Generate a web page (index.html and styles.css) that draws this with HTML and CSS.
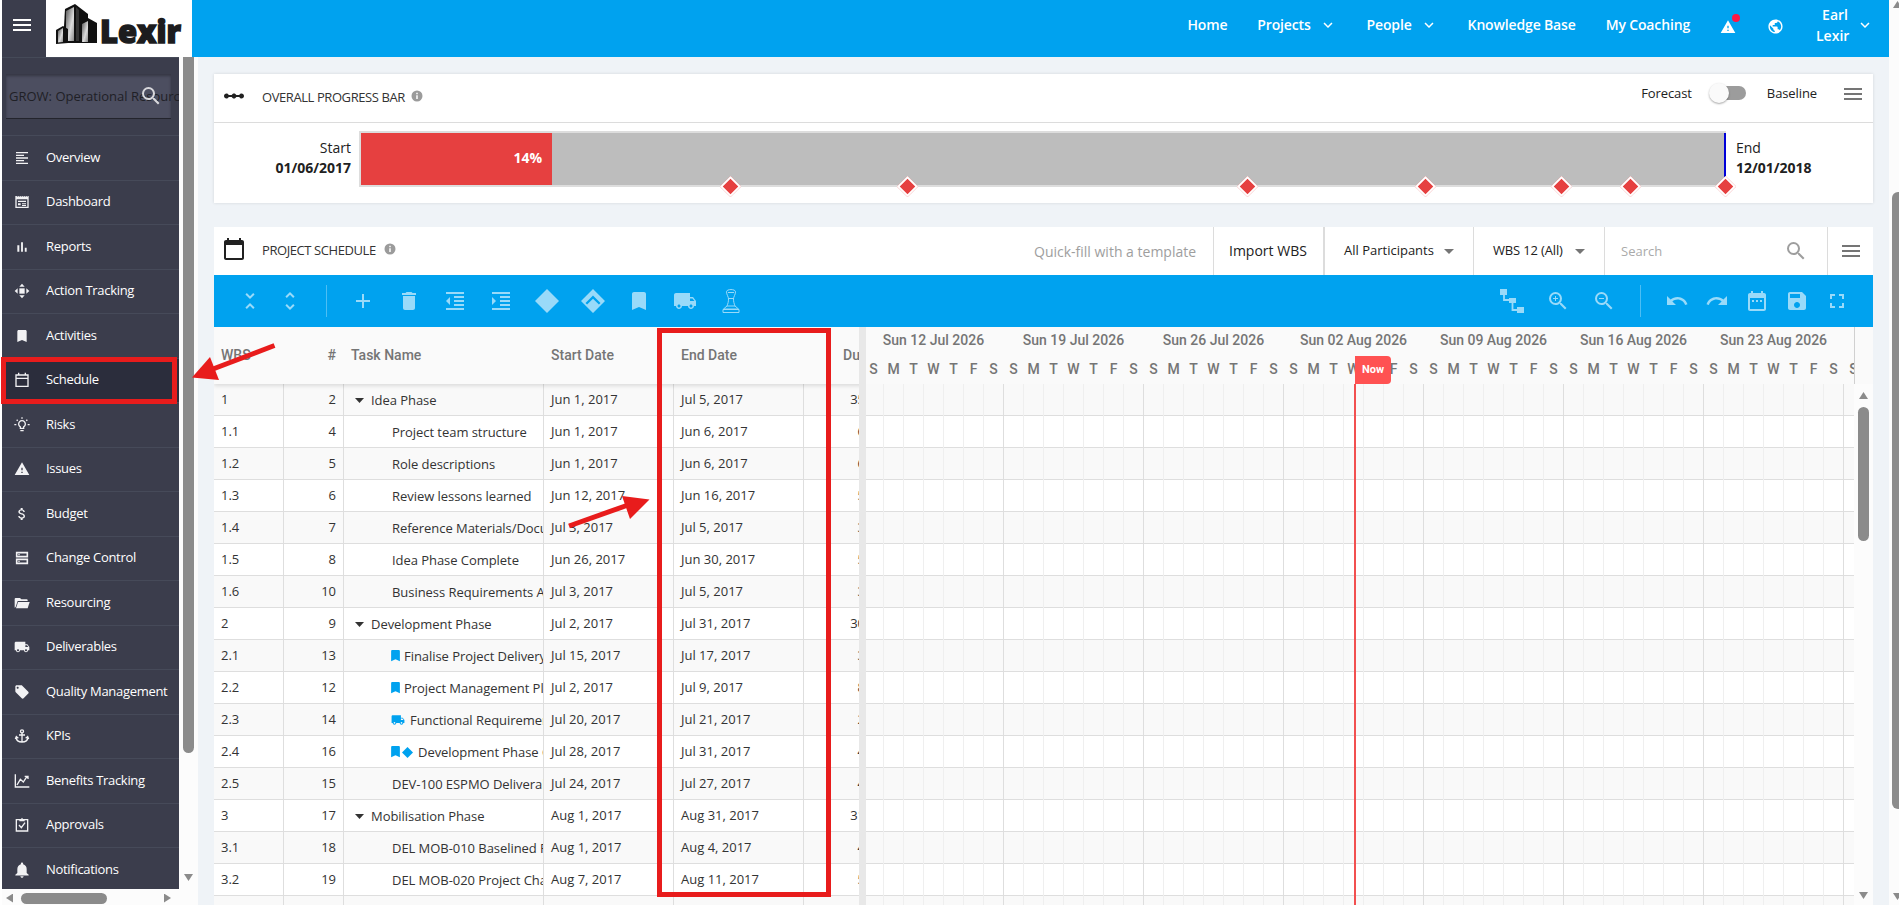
FILE: index.html
```html
<!DOCTYPE html>
<html lang="en">
<head>
    <meta charset="UTF-8">
    <meta name="viewport" content="width=device-width, initial-scale=1.0">
    <title>Lexir - Schedule</title>
    <link rel="stylesheet" href="styles.css">
</head>
<body>
    <!-- Icon sprite -->
    <svg class="sprite">
        <symbol id="menu" viewBox="0 0 24 24"><path d="M3 18h18v-2H3v2zm0-5h18v-2H3v2zm0-7v2h18V6H3z"/></symbol>
        <symbol id="search" viewBox="0 0 24 24"><path d="M15.5 14h-.79l-.28-.27A6.471 6.471 0 0 0 16 9.5 6.5 6.5 0 1 0 9.5 16c1.61 0 3.09-.59 4.23-1.57l.27.28v.79l5 4.99L20.49 19l-4.99-5zm-6 0C7.01 14 5 11.99 5 9.5S7.01 5 9.5 5 14 7.01 14 9.5 11.99 14 9.5 14z"/></symbol>
        <symbol id="overview" viewBox="0 0 24 24"><path d="M15 15H3v2h12v-2zm0-8H3v2h12V7zM3 13h18v-2H3v2zm0 8h18v-2H3v2zM3 3v2h18V3H3z"/></symbol>
        <symbol id="dashboard" viewBox="0 0 24 24"><path d="M2 3h2l1 1 1.500-1L8 4l1.500-1L11 4l1.500-1L14 4l1.500-1L17 4l1.500-1L20 4l1-1h1v18H2zM4 8v11h16V8zM6 10h12v2H6zM6 14h4v3H6zM12 14h6v1h-6zM12 16h6v2h-6z" fill-rule="evenodd"/></symbol>
        <symbol id="reports" viewBox="0 0 24 24"><path d="M5 9.200h3V19H5zM10.600 5h2.800v14h-2.800zm5.600 8H19v6h-2.800z"/></symbol>
        <symbol id="tracking" viewBox="0 0 24 24"><path d="M12 1l4 4.500H8zM12 23l4-4.500H8zM1 12l4.500-4v8zM23 12l-4.500-4v8z"/><path d="M8 8h8v8H8z"/></symbol>
        <symbol id="bookmark" viewBox="0 0 24 24"><path d="M17 3H7c-1.100 0-1.990.9-1.990 2L5 21l7-3 7 3V5c0-1.100-.9-2-2-2z"/></symbol>
        <symbol id="schedule" viewBox="0 0 24 24"><path d="M3 4.500h18v17H3zM3 9.500h18M7 1v3M17 1v3" fill="none" stroke="currentColor" stroke-width="2"/></symbol>
        <symbol id="calendar" viewBox="0 0 24 24"><path d="M20 3h-1V1h-2v2H7V1H5v2H4c-1.100 0-2 .9-2 2v16c0 1.100.9 2 2 2h16c1.100 0 2-.9 2-2V5c0-1.100-.9-2-2-2zm0 18H4V8h16v13z"/></symbol>
        <symbol id="risks" viewBox="0 0 24 24"><path d="M9.500 17v-2.200a5 5 0 1 1 5 0V17zM9.500 20.500h5M12 .5v2M.5 11.500h3M20.500 11.500h3M4 4l1.600 1.600M20 4l-1.600 1.600" fill="none" stroke="currentColor" stroke-width="2"/></symbol>
        <symbol id="warning" viewBox="0 0 24 24"><path d="M1 21h22L12 2 1 21zm12-3h-2v-2h2v2zm0-4h-2v-4h2v4z"/></symbol>
        <symbol id="budget" viewBox="0 0 24 24"><path d="M11.800 10.900c-2.270-.59-3-1.200-3-2.150 0-1.090 1.010-1.850 2.700-1.850 1.780 0 2.440.85 2.500 2.100h2.210c-.07-1.720-1.120-3.300-3.210-3.810V3h-3v2.160c-1.940.42-3.500 1.680-3.500 3.610 0 2.310 1.910 3.460 4.700 4.130 2.500.6 3 1.480 3 2.410 0 .69-.49 1.790-2.700 1.790-2.060 0-2.870-.92-2.980-2.100h-2.200c.12 2.190 1.760 3.420 3.680 3.830V21h3v-2.150c1.950-.37 3.500-1.500 3.500-3.550 0-2.840-2.430-3.810-4.700-4.400z"/></symbol>
        <symbol id="change" viewBox="0 0 24 24"><path d="M4 4h16v6H4zM4 14h16v6H4z" fill="none" stroke="currentColor" stroke-width="2.400"/><path d="M6.500 6h2v2h-2zM6.500 16h2v2h-2z"/></symbol>
        <symbol id="folder" viewBox="0 0 24 24"><path d="M1 19V6c0-1 .5-1.500 1.500-1.500H9l2 2h8c1 0 1.500.5 1.500 1.500v1H5.500L2.500 18z"/><path d="M6 10.500h17.500L20.500 20H3z"/></symbol>
        <symbol id="truck" viewBox="0 0 24 24"><path d="M20 8h-3V4H3c-1.100 0-2 .9-2 2v11h2c0 1.660 1.340 3 3 3s3-1.340 3-3h6c0 1.660 1.340 3 3 3s3-1.340 3-3h2v-5l-3-4zM6 18.500c-.83 0-1.500-.67-1.500-1.500s.67-1.500 1.500-1.500 1.500.67 1.500 1.500-.67 1.500-1.500 1.500zm13.500-9l1.960 2.500H17V9.500h2.500zm-1.500 9c-.83 0-1.500-.67-1.500-1.500s.67-1.500 1.500-1.500 1.500.67 1.500 1.500-.67 1.500-1.500 1.500z"/></symbol>
        <symbol id="tag" viewBox="0 0 24 24"><path d="M21.410 11.580l-9-9C12.050 2.220 11.550 2 11 2H4c-1.100 0-2 .9-2 2v7c0 .55.22 1.050.59 1.420l9 9c.36.36.86.58 1.410.58.55 0 1.050-.22 1.410-.59l7-7c.37-.36.59-.86.59-1.410 0-.55-.23-1.060-.59-1.420zM5.500 7C4.670 7 4 6.330 4 5.500S4.670 4 5.500 4 7 4.670 7 5.500 6.330 7 5.500 7z"/></symbol>
        <symbol id="anchor" viewBox="0 0 24 24"><path d="M12 7.500V21M7.500 10.500h9M3 14c.5 4.500 4 7 9 7s8.500-2.500 9-7M2 16.500L3.500 13l3 2.500M22 16.500L20.500 13l-3 2.500" fill="none" stroke="currentColor" stroke-width="2"/><circle cx="12" cy="5" r="2.300" fill="none" stroke="currentColor" stroke-width="2"/></symbol>
        <symbol id="chart" viewBox="0 0 24 24"><path d="M2 2v19h21M4.500 18l5-8.500 4.500 4 5.500-8.500M16 5h5v4" fill="none" stroke="currentColor" stroke-width="2"/></symbol>
        <symbol id="approvals" viewBox="0 0 24 24"><path d="M3.500 4h17v17h-17zM7.500 12l3.500 4 5.500-7.500" fill="none" stroke="currentColor" stroke-width="2"/><path d="M8 3h2.500l1.500-2 1.500 2H16v3.500H8z"/></symbol>
        <symbol id="bell" viewBox="0 0 24 24"><path d="M12 23.500c1.300 0 2.400-1 2.400-2.300H9.600c0 1.300 1.100 2.300 2.400 2.300zm7-7v-6c0-3.600-2-6.400-5.300-7.200V2.500c0-.9-.8-1.700-1.700-1.700s-1.700.8-1.700 1.700v.8C7 4.100 5 7 5 10.500v6l-3 2.600v1.200h20v-1.200z"/></symbol>
        <symbol id="globe" viewBox="0 0 24 24"><path d="M12 2C6.480 2 2 6.480 2 12s4.480 10 10 10 10-4.480 10-10S17.520 2 12 2zm-1 17.930c-3.950-.49-7-3.850-7-7.930 0-.62.08-1.210.21-1.790L9 15v1c0 1.100.9 2 2 2v1.930zm6.900-2.540c-.26-.81-1-1.390-1.900-1.390h-1v-3c0-.55-.45-1-1-1H8v-2h2c.55 0 1-.45 1-1V7h2c1.100 0 2-.9 2-2v-.41c2.930 1.190 5 4.060 5 7.410 0 2.080-.8 3.970-2.100 5.390z"/></symbol>
        <symbol id="info" viewBox="0 0 24 24"><path d="M12 1a11 11 0 1 0 0 22 11 11 0 0 0 0-22zm1.500 17h-3v-7.500h3zm0-9.500h-3v-3h3z"/></symbol>
        <symbol id="scale" viewBox="0 0 24 24"><path d="M19.500 9.500c-1.030 0-1.900.62-2.290 1.500h-2.920C13.900 10.120 13.030 9.500 12 9.500s-1.900.62-2.290 1.500H6.790c-.39-.88-1.260-1.500-2.290-1.500C3.120 9.500 2 10.620 2 12s1.120 2.500 2.500 2.500c1.030 0 1.900-.62 2.290-1.500h2.920c.39.88 1.260 1.500 2.290 1.500s1.900-.62 2.290-1.500h2.920c.39.88 1.260 1.500 2.290 1.500 1.380 0 2.500-1.120 2.500-2.500s-1.120-2.500-2.500-2.500z"/></symbol>
        <symbol id="chevron" viewBox="0 0 24 24"><path d="M16.590 8.590L12 13.170 7.410 8.590 6 10l6 6 6-6z"/></symbol>
        <symbol id="caret" viewBox="0 0 24 24"><path d="M7 10l5 5 5-5z"/></symbol>
        <symbol id="collapse" viewBox="0 0 24 24"><path d="M7.410 18.590L8.830 20 12 16.830 15.170 20l1.410-1.410L12 14l-4.590 4.590zm9.180-13.180L15.170 4 12 7.170 8.830 4 7.410 5.410 12 10l4.590-4.590z"/></symbol>
        <symbol id="expand" viewBox="0 0 24 24"><path d="M12 5.830L15.170 9l1.410-1.410L12 3 7.410 7.590 8.830 9 12 5.830zm0 12.340L8.830 15l-1.410 1.410L12 21l4.590-4.590L15.170 15 12 18.170z"/></symbol>
        <symbol id="add" viewBox="0 0 24 24"><path d="M19 13h-6v6h-2v-6H5v-2h6V5h2v6h6v2z"/></symbol>
        <symbol id="delete" viewBox="0 0 24 24"><path d="M6 19c0 1.100.9 2 2 2h8c1.100 0 2-.9 2-2V7H6v12zM19 4h-3.500l-1-1h-5l-1 1H5v2h14V4z"/></symbol>
        <symbol id="outdent" viewBox="0 0 24 24"><path d="M11 17h10v-2H11v2zm-8-5l4 4V8l-4 4zm0 9h18v-2H3v2zM3 3v2h18V3H3zm8 6h10V7H11v2zm0 4h10v-2H11v2z"/></symbol>
        <symbol id="indent" viewBox="0 0 24 24"><path d="M3 21h18v-2H3v2zM3 8v8l4-4-4-4zm8 9h10v-2H11v2zM3 3v2h18V3H3zm8 6h10V7H11v2zm0 4h10v-2H11v2z"/></symbol>
        <symbol id="diamond" viewBox="0 0 24 24"><path d="M12 0l12 12-12 12L0 12z"/></symbol>
        <symbol id="diamond-up" viewBox="0 0 24 24"><path d="M12 0l12 12-12 12L0 12zM12 6.500l-7.500 7.500 1.600 1.600L12 9.800l5.900 5.800 1.600-1.600z" fill-rule="evenodd"/></symbol>
        <symbol id="stamp" viewBox="0 0 24 24"><path d="M7.500 2.800c0-3 9-3 9 0 0 3-2 4.700-2 7.200 0 2.500.5 4.500 1.500 7H8c1-2.500 1.500-4.500 1.500-7 0-2.500-2-4.200-2-7.200zM9 3.500h6M9.500 9.500h5M8 17l-3.500 3h15L16 17M4 20.500h16v3H4z" fill="none" stroke="currentColor" stroke-width="1"/></symbol>
        <symbol id="tree" viewBox="0 0 24 24"><path d="M0 0h7v6H0zM9 9h7v5H9zM17 18h7v6h-7z"/><path d="M4 5v6h6M12.500 13v8H18" fill="none" stroke="currentColor" stroke-width="1.800"/></symbol>
        <symbol id="undo" viewBox="0 0 24 24"><path d="M12.500 8c-2.650 0-5.050.99-6.900 2.600L2 7v9h9l-3.620-3.620c1.390-1.160 3.160-1.880 5.120-1.880 3.540 0 6.550 2.310 7.600 5.500l2.370-.78C21.080 11.030 17.150 8 12.500 8z"/></symbol>
        <symbol id="redo" viewBox="0 0 24 24"><path d="M18.400 10.600C16.550 8.990 14.150 8 11.500 8c-4.650 0-8.580 3.030-9.960 7.220L3.900 16c1.050-3.190 4.050-5.500 7.600-5.500 1.950 0 3.730.72 5.120 1.880L13 16h9V7l-3.600 3.600z"/></symbol>
        <symbol id="range" viewBox="0 0 24 24"><path d="M9 11H7v2h2v-2zm4 0h-2v2h2v-2zm4 0h-2v2h2v-2zm2-7h-1V2h-2v2H8V2H6v2H5c-1.110 0-1.990.9-1.990 2L3 20c0 1.100.89 2 2 2h14c1.100 0 2-.9 2-2V6c0-1.100-.9-2-2-2zm0 16H5V9h14v11z"/></symbol>
        <symbol id="save" viewBox="0 0 24 24"><path d="M17 3H5c-1.110 0-2 .9-2 2v14c0 1.100.89 2 2 2h14c1.100 0 2-.9 2-2V7l-4-4zm-5 16c-1.660 0-3-1.340-3-3s1.340-3 3-3 3 1.340 3 3-1.340 3-3 3zm3-10H5V5h10v4z"/></symbol>
        <symbol id="fullscreen" viewBox="0 0 24 24"><path d="M7 14H5v5h5v-2H7v-3zm-2-4h2V7h3V5H5v5zm12 7h-3v2h5v-5h-2v3zM14 5v2h3v3h2V5h-5z"/></symbol>
    </svg>

    <div class="app">
        <!-- Top bar -->
        <header class="topbar">
            <button class="menu-btn"><svg class="icon"><use href="#menu"/></svg></button>
            <div class="logo">
                <svg width="146" height="57" viewBox="0 0 146 57">
                    <defs>
                        <linearGradient id="steel" x1="0" y1="0" x2="1" y2="1">
                            <stop offset="0" stop-color="#555"/>
                            <stop offset=".6" stop-color="#ddd"/>
                            <stop offset="1" stop-color="#888"/>
                        </linearGradient>
                    </defs>
                    <path d="M19 9l10-5 13 10v29H17z" fill="#111"/>
                    <path d="M20 11l8-4v34h-8z" fill="url(#steel)"/>
                    <path d="M30 7l3 3v31h-3z" fill="#333"/>
                    <path d="M10 30l7-4 5 3v14l-12 1z" fill="#111"/>
                    <path d="M12 31l5-3v14l-5 .5z" fill="url(#steel)"/>
                    <path d="M34 23l8-5 9 5v20H34z" fill="#111"/>
                    <path d="M36 24l6-3v21h-6z" fill="url(#steel)"/>
                    <text class="logo-text" x="54" y="43" textLength="81" lengthAdjust="spacingAndGlyphs">Lexir</text>
                </svg>
            </div>
            <nav class="nav">
                <a>Home</a>
                <a>Projects <svg class="icon chev"><use href="#chevron"/></svg></a>
                <a>People <svg class="icon chev"><use href="#chevron"/></svg></a>
                <a>Knowledge Base</a>
                <a>My Coaching</a>
                <span class="alert"><svg class="icon"><use href="#warning"/></svg><i class="dot"></i></span>
                <svg class="icon globe"><use href="#globe"/></svg>
                <span class="user">Earl<br>Lexir</span>
                <svg class="icon chev user-chev"><use href="#chevron"/></svg>
            </nav>
        </header>

        <div class="content">
            <!-- Sidebar -->
            <aside class="sidebar">
                <div class="side-main">
                    <div class="side-menu">
                        <div class="project-box">
                            <div class="project-input">GROW: Operational Resourcing</div>
                            <svg class="icon project-search"><use href="#search"/></svg>
                        </div>
                        <ul class="side-list" id="sideList"></ul>
                    </div>
                    <div class="side-scroll">
                        <div class="side-thumb"></div>
                        <div class="arrow-down"></div>
                    </div>
                </div>
                <div class="side-hscroll">
                    <div class="arrow-left"></div>
                    <div class="side-hthumb"></div>
                    <div class="arrow-right"></div>
                </div>
            </aside>

            <main class="main">
                <!-- Overall progress -->
                <section class="card progress-card">
                    <div class="card-head">
                        <svg class="icon head-icon"><use href="#scale"/></svg>
                        <h2>OVERALL PROGRESS BAR</h2>
                        <svg class="icon info"><use href="#info"/></svg>
                        <div class="switch-row">
                            <span>Forecast</span>
                            <div class="switch"><i></i></div>
                            <span>Baseline</span>
                            <svg class="icon burger"><use href="#menu"/></svg>
                        </div>
                    </div>
                    <div class="progress-body">
                        <div class="edge start">Start<b>01/06/2017</b></div>
                        <div class="bar" id="bar">
                            <div class="fill">14%</div>
                        </div>
                        <div class="edge end">End<b>12/01/2018</b></div>
                    </div>
                </section>

                <!-- Project schedule -->
                <section class="card schedule-card">
                    <div class="card-head">
                        <svg class="icon head-icon"><use href="#calendar"/></svg>
                        <h2>PROJECT SCHEDULE</h2>
                        <svg class="icon info"><use href="#info"/></svg>
                        <div class="filters">
                            <div class="template">Quick-fill with a template</div>
                            <div class="import">Import WBS</div>
                            <div class="select people">All Participants <svg class="icon"><use href="#caret"/></svg></div>
                            <div class="select wbs">WBS 12 (All) <svg class="icon"><use href="#caret"/></svg></div>
                            <div class="find">Search <svg class="icon"><use href="#search"/></svg></div>
                            <div class="more"><svg class="icon"><use href="#menu"/></svg></div>
                        </div>
                    </div>

                    <div class="toolbar">
                        <button class="small"><svg class="icon"><use href="#collapse"/></svg></button>
                        <button class="small"><svg class="icon"><use href="#expand"/></svg></button>
                        <span class="sep sep-left"></span>
                        <button><svg class="icon"><use href="#add"/></svg></button>
                        <button><svg class="icon"><use href="#delete"/></svg></button>
                        <button><svg class="icon"><use href="#outdent"/></svg></button>
                        <button><svg class="icon"><use href="#indent"/></svg></button>
                        <button><svg class="icon"><use href="#diamond"/></svg></button>
                        <button><svg class="icon"><use href="#diamond-up"/></svg></button>
                        <button><svg class="icon"><use href="#bookmark"/></svg></button>
                        <button><svg class="icon"><use href="#truck"/></svg></button>
                        <button><svg class="icon"><use href="#stamp"/></svg></button>
                        <span class="spacer"></span>
                        <button><svg class="icon"><use href="#tree"/></svg></button>
                        <button><svg class="icon" viewBox="0 0 24 24"><use href="#search"/><path d="M12 10h-2v2H9v-2H7V9h2V7h1v2h2v1z"/></svg></button>
                        <button><svg class="icon" viewBox="0 0 24 24"><use href="#search"/><path d="M7 9h5v1H7z"/></svg></button>
                        <span class="sep sep-right"></span>
                        <button class="small"><svg class="icon"><use href="#undo"/></svg></button>
                        <button class="small"><svg class="icon"><use href="#redo"/></svg></button>
                        <button class="small"><svg class="icon"><use href="#range"/></svg></button>
                        <button class="small"><svg class="icon"><use href="#save"/></svg></button>
                        <button class="small"><svg class="icon"><use href="#fullscreen"/></svg></button>
                    </div>

                    <div class="gantt">
                        <div class="grid">
                            <div class="grid-row grid-head">
                                <span>WBS</span><span>#</span><span>Task Name</span><span>Start Date</span><span>End Date</span><span>Duration</span>
                            </div>
                            <div id="rows"></div>
                        </div>
                        <div class="splitter"></div>
                        <div class="timeline">
                            <div class="time-head">
                                <div class="weeks" id="weeks"></div>
                                <div class="days" id="days"></div>
                            </div>
                            <div class="time-body" id="timeBody"></div>
                            <div class="now-line"></div>
                            <div class="now">Now</div>
                        </div>
                        <div class="gantt-scroll">
                            <div class="gantt-scroll-head"></div>
                            <div class="arrow-up"></div>
                            <div class="gantt-thumb"></div>
                            <div class="arrow-down"></div>
                        </div>
                    </div>
                </section>
            </main>
        </div>
    </div>

    <div class="page-scroll">
        <div class="arrow-up"></div>
        <div class="page-thumb"></div>
        <div class="arrow-down"></div>
    </div>

    <!-- Highlights -->
    <svg class="marks" width="1899" height="905" viewBox="0 0 1899 905">
        <g fill="none" stroke="#e81c1c" stroke-width="5">
            <rect x="3.500" y="359.500" width="171" height="42"/>
            <rect x="659.500" y="330.500" width="169" height="564"/>
            <path d="M274.500 345.500L213 369"/>
            <path d="M569 526L628 505"/>
        </g>
        <g fill="#e81c1c">
            <path d="M192 377.500L210 357l9 23z"/>
            <path d="M649.500 499.500L622 496l8 23z"/>
        </g>
    </svg>

    <script src="script.js"></script>
</body>
</html>
```

FILE: styles.css
```css
* {
    margin: 0;
    padding: 0;
    box-sizing: border-box;
}

body {
    width: 1899px;
    height: 905px;
    padding-left: 2px;
    display: flex;
    overflow: hidden;
    position: relative;
    background-color: #fff;
    color: #212121;
    font-family: "Open Sans", "Noto Sans", sans-serif;
    font-size: 13px;
}

.sprite {
    position: absolute;
    width: 0;
    height: 0;
}

.icon {
    width: 24px;
    height: 24px;
    flex: none;
    fill: currentColor;
}

button {
    border: none;
    background: none;
    color: inherit;
    display: flex;
    align-items: center;
    justify-content: center;
}

.app {
    width: 1887px;
    height: 905px;
    display: flex;
    flex-direction: column;
}

/* Top bar */
.topbar {
    height: 57px;
    flex: none;
    display: flex;
    background-color: #00a2ef;
    color: #fff;
}

.menu-btn {
    width: 44px;
    height: 57px;
    padding: 0 4px 7px 0;
    background-color: #3b3d4c;
}

.logo {
    width: 146px;
    height: 57px;
    background-color: #fff;
}

.logo svg {
    display: block;
}

.logo-text {
    font-family: "Open Sans", sans-serif;
    font-size: 32px;
    font-weight: 800;
    fill: #1c1c1e;
    stroke: #1c1c1e;
    stroke-width: 1.5;
}

.nav {
    flex: 1;
    height: 50px;
    display: flex;
    align-items: center;
    justify-content: flex-end;
    padding-right: 15px;
    font-size: 14px;
    font-weight: 600;
}

.nav a {
    display: flex;
    align-items: center;
    margin-right: 30px;
    padding-bottom: 2px;
    letter-spacing: -.15px;
}

.chev {
    width: 18px;
    height: 18px;
    margin-left: 8px;
}

.nav a .chev {
    margin-top: 2px;
}

.alert {
    position: relative;
    width: 16px;
    height: 16px;
    margin: 3px 31px 0 0;
}

.alert .icon {
    display: block;
    width: 16px;
    height: 16px;
}

.dot {
    position: absolute;
    top: -5px;
    left: 12px;
    width: 8px;
    height: 8px;
    border-radius: 50%;
    background-color: #ff1744;
}

.globe {
    width: 17px;
    height: 17px;
    margin: 3px 32px 0 0;
}

.user {
    width: 32px;
    text-align: right;
    line-height: 21px;
}

.content {
    flex: 1;
    min-height: 0;
    display: flex;
}

/* Sidebar */
.sidebar {
    width: 196px;
    flex: none;
    background-color: #fcfcfc;
}

.side-main {
    height: 832px;
    display: flex;
}

.side-menu {
    width: 177px;
    overflow: hidden;
    background-color: #3b3d4c;
    border-top: 1px solid #454a58;
}

.project-box {
    height: 77px;
    padding: 16px 0 0 4px;
    position: relative;
}

.project-input {
    width: 165px;
    height: 45px;
    padding-left: 3px;
    line-height: 44px;
    white-space: nowrap;
    background-color: #4c4e60;
    box-shadow: inset 0 2px 3px rgba(0, 0, 0, .3);
    border-bottom: 1px solid #23242d;
    color: #1f2026;
}

.project-search {
    position: absolute;
    left: 137px;
    top: 26px;
    color: #d8d8dc;
}

.side-list {
    list-style: none;
}

.side-list li {
    height: 44.5px;
    display: flex;
    align-items: center;
    padding-left: 12px;
    border-top: 1px solid #464a59;
    color: #fff;
    white-space: nowrap;
}

.side-list span {
    padding-bottom: 2px;
    letter-spacing: -.3px;
}

.side-list .icon {
    width: 16px;
    height: 16px;
    margin-right: 16px;
    color: #f2f2f4;
}

.side-list .active {
    background-color: #2b2d3c;
}

.side-scroll {
    width: 19px;
    padding-left: 4px;
}

.side-thumb {
    width: 11px;
    height: 696px;
    border-radius: 0 0 6px 6px;
    background-color: #8b8b8b;
    margin-bottom: 121px;
}

.arrow-up,
.arrow-down {
    width: 9px;
    height: 7px;
    margin-left: 1px;
    background-color: #8b8b8b;
    clip-path: polygon(0 0, 100% 0, 50% 100%);
}

.arrow-up {
    clip-path: polygon(0 100%, 100% 100%, 50% 0);
}

.side-hscroll {
    height: 16px;
    display: flex;
    align-items: center;
    padding: 2px 0 0 4px;
}

.arrow-left,
.arrow-right {
    width: 7px;
    height: 9px;
    background-color: #8b8b8b;
    clip-path: polygon(100% 0, 100% 100%, 0 50%);
}

.arrow-right {
    clip-path: polygon(0 0, 0 100%, 100% 50%);
}

.side-hthumb {
    width: 86px;
    height: 11px;
    margin: 0 57px 0 8px;
    border-radius: 6px;
    background-color: #8b8b8b;
}

/* Cards */
.main {
    flex: 1;
    min-width: 0;
    padding: 17px 16px 0;
    overflow: hidden;
    background-color: #eff3f7;
}

.card {
    background-color: #fff;
}

.progress-card {
    height: 129px;
    margin-bottom: 24px;
    box-shadow: 0 0 3px rgba(0, 0, 0, .12);
}

.card-head {
    height: 48px;
    display: flex;
    align-items: center;
    padding-left: 8px;
}

.progress-card .card-head {
    height: 49px;
    border-bottom: 1px solid #dcdcdc;
}

.head-icon {
    margin-top: -4px;
}

.card-head h2 {
    margin: -2px 0 0 16px;
    font-size: 13px;
    font-weight: 400;
    color: #333;
    letter-spacing: -.42px;
}

.info {
    width: 12px;
    height: 12px;
    margin: -5px 0 0 6px;
    color: #9b9b9b;
}

.schedule-card .info {
    margin-left: 8px;
}

.switch-row {
    margin: -11px 7px 0 auto;
    display: flex;
    align-items: center;
    height: 24px;
}

.switch {
    width: 35px;
    height: 14px;
    margin: 1px 21px 0 19px;
    border-radius: 7px;
    background-color: #9c9c9c;
}

.switch-row span {
    letter-spacing: -.1px;
}

.switch i {
    display: block;
    width: 20px;
    height: 20px;
    margin: -3px 0 0 -2px;
    border-radius: 50%;
    background-color: #fafafa;
    box-shadow: 0 1px 2px rgba(0, 0, 0, .35);
}

.burger {
    margin: 3px 1px 0 24px;
    color: #757575;
}

/* Progress bar */
.progress-body {
    display: flex;
    padding-top: 8px;
}

.edge {
    font-size: 14px;
    line-height: 20px;
    padding-top: 7px;
}

.edge b {
    display: block;
}

.start {
    width: 137px;
    text-align: right;
}

.bar {
    width: 1367px;
    height: 56px;
    margin: 0 10px 0 8px;
    position: relative;
    border: 2px solid #ddd;
    border-right: none;
    background-color: #bdbdbd;
}

.bar::after {
    content: "";
    position: absolute;
    right: 0;
    top: 0;
    width: 2px;
    height: 52px;
    background-color: #0000d8;
}

.fill {
    width: 191px;
    height: 52px;
    padding-right: 10px;
    line-height: 50px;
    text-align: right;
    font-size: 14px;
    font-weight: 700;
    color: #fff;
    background-color: #e64040;
}

.milestone {
    position: absolute;
    z-index: 1;
    top: 46px;
    width: 15px;
    height: 15px;
    margin-left: -7.5px;
    border: 2px solid #fff;
    background-color: #e64040;
    transform: rotate(45deg);
}

/* Schedule filters */
.filters {
    display: flex;
    height: 48px;
    margin-left: auto;
    line-height: 48px;
}

.filters > div {
    height: 48px;
    display: flex;
    align-items: center;
    white-space: nowrap;
}

.filters .template {
    width: 179px;
    color: #9e9e9e;
    font-size: 14px;
    padding-top: 1px;
}

.filters .import {
    width: 110px;
    padding: 0 0 1px 15px;
    border-left: 1px solid #dcdcdc;
    font-size: 14px;
}

.filters .select {
    padding-bottom: 2px;
}

.select.people {
    width: 150px;
    padding-left: 19px;
    border-left: 2px solid #dcdcdc;
}

.select.wbs {
    width: 131px;
    padding-left: 19px;
    border-left: 1px solid #dcdcdc;
    letter-spacing: -.15px;
}

.select .icon {
    margin: 2px 0 0 3px;
    color: #757575;
}

.wbs .icon {
    margin-left: 5px;
}

.find {
    width: 223px;
    padding: 0 19px 0 16px;
    justify-content: space-between;
    border-left: 1px solid #dcdcdc;
    color: #aaa;
}

.find .icon {
    color: #9e9e9e;
}

.more {
    width: 46px;
    padding-left: 11px;
    border-left: 1px solid #dcdcdc;
    color: #757575;
}

.toolbar {
    height: 52px;
    padding: 0 16px;
    display: flex;
    align-items: center;
    background-color: #00a2ef;
    color: #99daf9;
}

.toolbar button {
    width: 46px;
    height: 46px;
}

.toolbar .small {
    width: 40px;
}

.sep {
    width: 1px;
    height: 32px;
    background-color: #4dbef4;
}

.sep-left {
    margin: 0 13px 0 16px;
}

.sep-right {
    margin: 0 16px 0 13px;
}

.spacer {
    flex: 1;
}

/* Gantt */
.gantt {
    height: 578px;
    display: flex;
    overflow: hidden;
}

.grid {
    width: 645px;
    overflow: hidden;
}

.grid-row {
    width: 660px;
    height: 32px;
    display: grid;
    grid-template-columns: 70px 60px 200px 130px 130px 70px;
    line-height: 30px;
    border-bottom: 1px solid #dedede;
    color: #333;
}

.grid-row > span {
    padding: 0 7px;
    overflow: hidden;
    white-space: nowrap;
    border-right: 1px solid #dedede;
}

.grid-row > span:nth-child(2),
.grid-row > span:nth-child(6) {
    text-align: right;
}

.grid-row > span:nth-child(6) {
    border-right: none;
    padding-right: 9px;
}

.grid-row:nth-child(odd),
.time-row:nth-child(odd) {
    background-color: #f9f9f9;
}

.grid .grid-head {
    height: 57px;
    line-height: 57px;
    position: relative;
    border-bottom: none;
    background-color: #fafafa;
    box-shadow: 0 2px 4px rgba(0, 0, 0, .12);
    color: #757575;
    font-family: Roboto, sans-serif;
    font-size: 14px;
    font-weight: 500;
}

.grid-head > span {
    border-right-color: transparent;
}

.grid .grid-head > span:nth-child(6) {
    text-align: left;
    padding-left: 39px;
}

.grid-row .task {
    display: flex;
    align-items: center;
    height: 31px;
    padding: 0 0 0 48px;
    letter-spacing: -.05px;
}

.grid-row .task.phase {
    padding-left: 11px;
}

.tri {
    width: 9px;
    height: 5px;
    margin: 2px 7px 0 0;
    flex: none;
    background-color: #333;
    clip-path: polygon(0 0, 100% 0, 50% 100%);
}

.task .icon {
    width: 15px;
    height: 15px;
    color: #00a2ef;
}

.task .ico-bookmark {
    margin: 0 1px 0 -4px;
}

.task .ico-truck {
    width: 14px;
    height: 14px;
    margin: 0 5px 0 -1px;
}

.task .ico-diamond {
    width: 11px;
    height: 11px;
    margin: 1px 5px 0 -2px;
}

.splitter {
    width: 7px;
    background-color: #e8e8e8;
}

.timeline {
    width: 988px;
    position: relative;
    overflow: hidden;
}

.time-head {
    height: 57px;
    position: relative;
    overflow: hidden;
    background-color: #fafafa;
    box-shadow: 0 2px 4px rgba(0, 0, 0, .12);
    color: #757575;
    font-family: Roboto, sans-serif;
    font-size: 14px;
    font-weight: 500;
}

.weeks,
.days {
    display: flex;
    width: 1140px;
    margin-left: -2.5px;
    text-align: center;
}

.weeks span {
    width: 140px;
    line-height: 27px;
}

.days span {
    width: 20px;
    line-height: 30px;
}

.time-row {
    height: 32px;
    border-bottom: 1px solid #dedede;
}

.time-body {
    position: relative;
}

/* Day and week lines */
.time-body::after {
    content: "";
    position: absolute;
    top: 0;
    left: 0;
    right: 0;
    bottom: 0;
    background-image:
        linear-gradient(to right, #dedede 1px, transparent 1px),
        linear-gradient(to right, #efefef 1px, transparent 1px);
    background-size: 140px 100%, 20px 100%;
    background-position: 137px 0, 17px 0;
}

.now-line {
    position: absolute;
    left: 488px;
    top: 57px;
    width: 2px;
    bottom: 0;
    background-color: #f25050;
}

.now {
    position: absolute;
    left: 489px;
    top: 29px;
    width: 36px;
    height: 28px;
    line-height: 28px;
    text-align: center;
    border-radius: 0 4px 4px 0;
    background-color: #ff5252;
    color: #fff;
    font-family: Roboto, sans-serif;
    font-size: 11px;
    font-weight: 700;
}

.gantt-scroll {
    width: 19px;
    padding-left: 4px;
    background-color: #fcfcfc;
}

.gantt-scroll-head {
    height: 57px;
    margin: 0 0 8px -4px;
    border-left: 1px solid #d0d0d0;
    background-color: #fafafa;
}

.gantt-thumb {
    width: 11px;
    height: 134px;
    margin: 8px 0 351px;
    border-radius: 6px;
    background-color: #8b8b8b;
}

/* Window scrollbar */
.page-scroll {
    width: 10px;
    overflow: hidden;
    padding: 1px 0 0 3px;
    background-color: #fcfcfc;
}

.page-thumb {
    width: 12px;
    height: 617px;
    margin: 184px 0 84px;
    border-radius: 6px;
    background-color: #8b8b8b;
}

.marks {
    position: absolute;
    left: 0;
    top: 0;
}
```

FILE: script.js
```js
const menu = [
    ['overview', 'Overview'], ['dashboard', 'Dashboard'], ['reports', 'Reports'],
    ['tracking', 'Action Tracking'], ['bookmark', 'Activities'], ['schedule', 'Schedule'],
    ['risks', 'Risks'], ['warning', 'Issues'], ['budget', 'Budget'], ['change', 'Change Control'],
    ['folder', 'Resourcing'], ['truck', 'Deliverables'], ['tag', 'Quality Management'],
    ['anchor', 'KPIs'], ['chart', 'Benefits Tracking'], ['approvals', 'Approvals'],
    ['bell', 'Notifications']
];

// wbs, id, task, start, end, duration, icons
const tasks = [
    ['1', 2, 'Idea Phase', 'Jun 1, 2017', 'Jul 5, 2017', 35],
    ['1.1', 4, 'Project team structure', 'Jun 1, 2017', 'Jun 6, 2017', 6],
    ['1.2', 5, 'Role descriptions', 'Jun 1, 2017', 'Jun 6, 2017', 6],
    ['1.3', 6, 'Review lessons learned', 'Jun 12, 2017', 'Jun 16, 2017', 5],
    ['1.4', 7, 'Reference Materials/Documents', 'Jul 3, 2017', 'Jul 5, 2017', 3],
    ['1.5', 8, 'Idea Phase Complete', 'Jun 26, 2017', 'Jun 30, 2017', 5],
    ['1.6', 10, 'Business Requirements Analysis', 'Jul 3, 2017', 'Jul 5, 2017', 3],
    ['2', 9, 'Development Phase', 'Jul 2, 2017', 'Jul 31, 2017', 30],
    ['2.1', 13, 'Finalise Project Delivery', 'Jul 15, 2017', 'Jul 17, 2017', 3, ['bookmark']],
    ['2.2', 12, 'Project Management Plan', 'Jul 2, 2017', 'Jul 9, 2017', 8, ['bookmark']],
    ['2.3', 14, 'Functional Requirements', 'Jul 20, 2017', 'Jul 21, 2017', 2, ['truck']],
    ['2.4', 16, 'Development Phase Complete', 'Jul 28, 2017', 'Jul 31, 2017', 4, ['bookmark', 'diamond']],
    ['2.5', 15, 'DEV-100 ESPMO Deliverables', 'Jul 24, 2017', 'Jul 27, 2017', 4],
    ['3', 17, 'Mobilisation Phase', 'Aug 1, 2017', 'Aug 31, 2017', 31],
    ['3.1', 18, 'DEL MOB-010 Baselined Plan', 'Aug 1, 2017', 'Aug 4, 2017', 4],
    ['3.2', 19, 'DEL MOB-020 Project Charter', 'Aug 7, 2017', 'Aug 11, 2017', 5],
    ['', '', '', '', '', '']
];

const weeks = ['Sun 12 Jul 2026', 'Sun 19 Jul 2026', 'Sun 26 Jul 2026', 'Sun 02 Aug 2026',
    'Sun 09 Aug 2026', 'Sun 16 Aug 2026', 'Sun 23 Aug 2026'];

const milestones = [369, 546, 886.5, 1064.5, 1200.5, 1269.5, 1364.5];

function icon(name) {
    return `<svg class="icon ico-${name}"><use href="#${name}"/></svg>`;
}

document.getElementById('sideList').innerHTML = menu.map(([id, label]) =>
    `<li class="${label === 'Schedule' ? 'active' : ''}">${icon(id)}<span>${label}</span></li>`).join('');

document.getElementById('rows').innerHTML = tasks.map(t => {
    const phase = t[0] && !t[0].includes('.');
    const lead = phase ? '<i class="tri"></i>' : (t[6] || []).map(icon).join('');
    return `<div class="grid-row"><span>${t[0]}</span><span>${t[1]}</span>` +
        `<span class="task${phase ? ' phase' : ''}">${lead}${t[2]}</span>` +
        `<span>${t[3]}</span><span>${t[4]}</span><span>${t[5]}</span></div>`;
}).join('');

document.getElementById('timeBody').innerHTML = tasks.map(() => '<div class="time-row"></div>').join('');
document.getElementById('weeks').innerHTML = weeks.map(w => `<span>${w}</span>`).join('');
document.getElementById('days').innerHTML = ('SMTWTFS'.repeat(7) + 'S').split('').map(d => `<span>${d}</span>`).join('');

document.getElementById('bar').insertAdjacentHTML('beforeend',
    milestones.map(x => `<i class="milestone" style="left: ${x}px"></i>`).join(''));
```
